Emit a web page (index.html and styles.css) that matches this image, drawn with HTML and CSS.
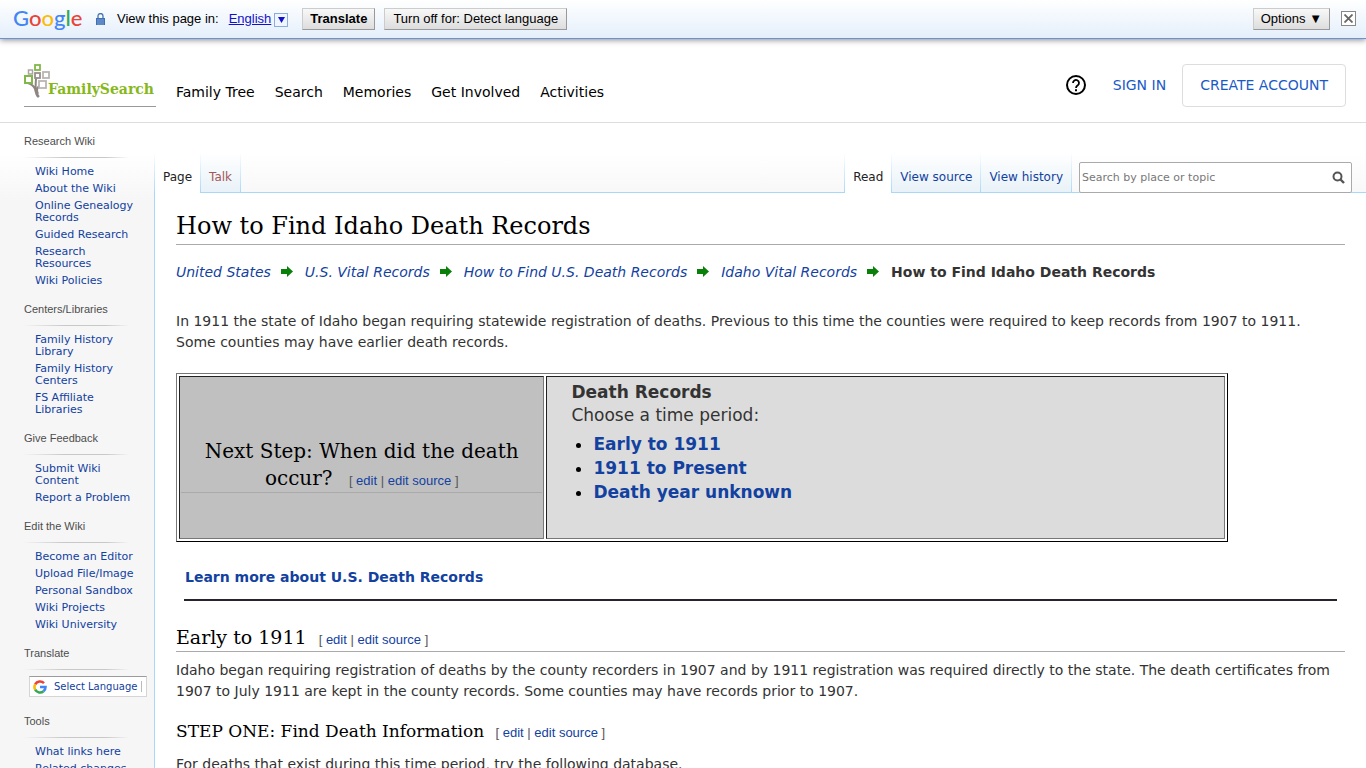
FILE: index.html
```html
<!DOCTYPE html>
<html lang="en">
<head>
  <meta charset="UTF-8">
  <title>How to Find Idaho Death Records</title>
  <link rel="stylesheet" href="styles.css">
</head>
<body>

  <div class="translate-bar">
    <span class="google"><span class="g-blue">G</span><span class="g-red">o</span><span class="g-yellow">o</span><span class="g-blue">g</span><span class="g-green">l</span><span class="g-red">e</span></span>
    <svg class="lock" width="9" height="12" viewBox="0 0 9 12">
      <path d="M2 5V3a2.500 2.500 0 0 1 5 0v2" fill="none" stroke="#4573b5" stroke-width="1.300"/>
      <rect x="0" y="5" width="9" height="7" fill="#3c6fb6"/>
      <path d="M1 7h7M1 9h7M1 11h7" stroke="#9dbce4" stroke-width=".7"/>
    </svg>
    <span class="view-in">View this page in:</span>
    <a href="#" class="lang">English</a>
    <button class="lang-arrow" aria-label="Choose language"><svg width="7" height="6" viewBox="0 0 7 6"><path d="M0 0h7L3.500 6z" fill="#11c"/></svg></button>
    <button class="bar-button translate"><b>Translate</b></button>
    <button class="bar-button">Turn off for: Detect language</button>
    <button class="bar-button options">Options ▼</button>
    <button class="close" aria-label="Close"><svg width="9" height="9" viewBox="0 0 9 9"><path d="M.5.5l8 8M8.500.5l-8 8" stroke="#666" stroke-width="1.800"/></svg></button>
  </div>

  <header class="header">
    <a href="#" class="logo" aria-label="FamilySearch home">
      <svg width="27" height="36" viewBox="0 0 27 36" fill="none">
        <path d="M4 20c3 1 6 3 7 6 1 4 1 6 3 8M12 15c0 5-1 8 0 12 0 3 1 5 3 7M17 22c-4 2-5 5-3 9" stroke="#8d8580" stroke-width="2"/>
        <rect x="11" y="2" width="5" height="5" stroke="#82b84a" stroke-width="1.800"/>
        <rect x="4.500" y="7" width="4" height="4" stroke="#aaa5a2" stroke-width="1.500"/>
        <rect x="11" y="10" width="5" height="5" stroke="#99908b" stroke-width="1.800"/>
        <rect x="19" y="9" width="6" height="6" stroke="#b9b5b2" stroke-width="1.800"/>
        <rect x="1" y="13" width="7" height="7" stroke="#82b84a" stroke-width="2"/>
        <rect x="15" y="18" width="7" height="7" stroke="#b9b5b2" stroke-width="1.800" fill="#fff"/>
      </svg>
      <span>FamilySearch</span>
    </a>
    <nav class="nav">
      <a href="#">Family Tree</a>
      <a href="#">Search</a>
      <a href="#">Memories</a>
      <a href="#">Get Involved</a>
      <a href="#">Activities</a>
    </nav>
    <div class="account">
      <button class="help" aria-label="Help">
        <svg width="22" height="22" viewBox="0 0 22 22" fill="none" stroke="#000" stroke-width="2">
          <circle cx="11" cy="11" r="9"/>
          <path d="M8 9a3 3 0 1 1 4.800 2.300C11.500 12.200 11 12.600 11 14" stroke-width="1.800"/>
          <path d="M11 15.200v2"/>
        </svg>
      </button>
      <a href="#" class="sign-in">SIGN IN</a>
      <a href="#" class="create">CREATE ACCOUNT</a>
    </div>
  </header>

  <div class="page">
    <aside class="sidebar">
      <section>
        <h3>Research Wiki</h3>
        <ul>
          <li><a href="#">Wiki Home</a></li>
          <li><a href="#">About the Wiki</a></li>
          <li><a href="#">Online Genealogy Records</a></li>
          <li><a href="#">Guided Research</a></li>
          <li><a href="#">Research<br>Resources</a></li>
          <li><a href="#">Wiki Policies</a></li>
        </ul>
      </section>
      <section>
        <h3>Centers/Libraries</h3>
        <ul>
          <li><a href="#">Family History<br>Library</a></li>
          <li><a href="#">Family History<br>Centers</a></li>
          <li><a href="#">FS Affiliate<br>Libraries</a></li>
        </ul>
      </section>
      <section>
        <h3>Give Feedback</h3>
        <ul>
          <li><a href="#">Submit Wiki<br>Content</a></li>
          <li><a href="#">Report a Problem</a></li>
        </ul>
      </section>
      <section>
        <h3>Edit the Wiki</h3>
        <ul>
          <li><a href="#">Become an Editor</a></li>
          <li><a href="#">Upload File/Image</a></li>
          <li><a href="#">Personal Sandbox</a></li>
          <li><a href="#">Wiki Projects</a></li>
          <li><a href="#">Wiki University</a></li>
        </ul>
      </section>
      <section>
        <h3>Translate</h3>
        <button class="select-language">
          <svg width="14" height="14" viewBox="0 0 14 14" fill="none" stroke-width="2.600">
            <path d="M2.200 4.300A5.500 5.500 0 0 1 11 3.200" stroke="#ea4335"/>
            <path d="M2.200 4.300a5.500 5.500 0 0 0 0 5.400" stroke="#fbbc05"/>
            <path d="M2.200 9.700a5.500 5.500 0 0 0 8.300 1.600" stroke="#34a853"/>
            <path d="M10.500 11.300A5.500 5.500 0 0 0 12.500 7H7" stroke="#4285f4"/>
          </svg>
          <span>Select Language</span>
        </button>
      </section>
      <section>
        <h3>Tools</h3>
        <ul>
          <li><a href="#">What links here</a></li>
          <li><a href="#">Related changes</a></li>
        </ul>
      </section>
    </aside>

    <main class="main">
      <div class="tabs">
        <a href="#" class="tab active">Page</a>
        <a href="#" class="tab talk">Talk</a>
        <span class="spacer"></span>
        <a href="#" class="tab active read">Read</a>
        <a href="#" class="tab">View source</a>
        <a href="#" class="tab">View history</a>
        <form class="search">
          <input type="text" placeholder="Search by place or topic" aria-label="Search by place or topic">
          <button type="button" aria-label="Search"><svg width="13" height="13" viewBox="0 0 13 13" fill="none" stroke="#555"><circle cx="5.500" cy="5.500" r="4" stroke-width="2"/><path d="M8.500 8.500l3.500 3.500" stroke-width="2.400"/></svg></button>
        </form>
      </div>

      <article class="content">
        <h1>How to Find Idaho Death Records</h1>

        <div class="crumbs">
          <a href="#">United States</a>
          <svg class="arrow" width="12" height="12" viewBox="0 0 12 12"><path d="M0 3h6V0l6 5.500L6 11V8H0z" fill="#0a800a"/></svg>
          <a href="#">U.S. Vital Records</a>
          <svg class="arrow" width="12" height="12" viewBox="0 0 12 12"><path d="M0 3h6V0l6 5.500L6 11V8H0z" fill="#0a800a"/></svg>
          <a href="#">How to Find U.S. Death Records</a>
          <svg class="arrow" width="12" height="12" viewBox="0 0 12 12"><path d="M0 3h6V0l6 5.500L6 11V8H0z" fill="#0a800a"/></svg>
          <a href="#">Idaho Vital Records</a>
          <svg class="arrow" width="12" height="12" viewBox="0 0 12 12"><path d="M0 3h6V0l6 5.500L6 11V8H0z" fill="#0a800a"/></svg>
          <b>How to Find Idaho Death Records</b>
        </div>

        <p>In 1911 the state of Idaho began requiring statewide registration of deaths. Previous to this time the counties were required to keep records from 1907 to 1911.<br>Some counties may have earlier death records.</p>

        <table class="steps">
          <tr>
            <td class="question">
              <h2>Next Step: When did the death occur? <span class="edit">[ <a href="#">edit</a> | <a href="#">edit source</a> ]</span></h2>
            </td>
            <td class="periods">
              <b>Death Records</b><br>
              Choose a time period:
              <ul>
                <li><a href="#">Early to 1911</a></li>
                <li><a href="#">1911 to Present</a></li>
                <li><a href="#">Death year unknown</a></li>
              </ul>
            </td>
          </tr>
        </table>

        <div class="learn"><a href="#">Learn more about U.S. Death Records</a></div>

        <h2>Early to 1911 <span class="edit">[ <a href="#">edit</a> | <a href="#">edit source</a> ]</span></h2>
        <p>Idaho began requiring registration of deaths by the county recorders in 1907 and by 1911 registration was required directly to the state. The death certificates from 1907 to July 1911 are kept in the county records. Some counties may have records prior to 1907.</p>

        <h3>STEP ONE: Find Death Information <span class="edit">[ <a href="#">edit</a> | <a href="#">edit source</a> ]</span></h3>
        <p>For deaths that exist during this time period, try the following database.</p>
      </article>
    </main>
  </div>

</body>
</html>
```
FILE: styles.css
```css
* {
  box-sizing: border-box;
}
body {
  margin: 0;
  height: 100vh;
  overflow: hidden;
  display: flex;
  flex-direction: column;
  background: #fff;
  color: #333;
  font-family: Verdana, "DejaVu Sans", sans-serif;
  font-size: 14px;
}
a {
  color: #1241a0;
  text-decoration: none;
}
button {
  font-family: inherit;
  cursor: pointer;
}
h1, h2, h3, p, ul {
  margin: 0;
  padding: 0;
}

/* google translate bar */
.translate-bar {
  flex: none;
  display: flex;
  align-items: center;
  height: 39px;
  padding: 0 10px 1px 13px;
  background: linear-gradient(#fff, #e4effb);
  border-bottom: 1px solid #6b90da;
  box-shadow: 0 1px 6px #888;
  color: #000;
  font-family: Arial, "Liberation Sans", sans-serif;
  font-size: 13px;
}
.google {
  width: 83px;
  padding-bottom: 2px;
  font-family: Lato, sans-serif;
  font-size: 22px;
  font-weight: 500;
  line-height: 30px;
}
.g-blue { color: #4285f4; }
.g-red { color: #ea4335; }
.g-yellow { color: #fbbc05; }
.g-green { color: #34a853; }
.view-in {
  margin: 0 10px 0 12px;
}
.lang {
  color: #11c;
  text-decoration: underline;
}
.lang-arrow {
  display: flex;
  align-items: center;
  justify-content: center;
  width: 14px;
  height: 14px;
  margin: 2px 14px 0 3px;
  padding: 0;
  background: #f0f6ff;
  border: 1px solid #8cace0;
}
.bar-button {
  height: 22px;
  margin-right: 9px;
  padding: 0 8px;
  background: linear-gradient(#f8f8f8, #ddd);
  border: 1px solid;
  border-color: #ccc #999 #999 #ccc;
  color: #000;
  font-size: 13px;
}
.translate {
  padding: 0 7px;
}
.options {
  margin: 0 11px 0 auto;
  padding: 0 7px;
}
.close {
  display: flex;
  align-items: center;
  justify-content: center;
  width: 15px;
  height: 15px;
  padding: 0;
  background: #fff;
  border: 1px solid #888;
}

/* site header */
.header {
  flex: none;
  display: flex;
  align-items: center;
  height: 84px;
  padding: 9px 20px 0 24px;
  border-bottom: 1px solid #ddd;
}
.logo {
  display: flex;
  align-items: flex-end;
  width: 132px;
  height: 44px;
  padding-bottom: 7px;
  border-bottom: 1px solid #999;
  color: #86b81c;
  font-family: "DejaVu Serif", serif;
  font-size: 14px;
  font-weight: bold;
}
.logo svg {
  flex: none;
}
.logo span {
  margin-left: -3px;
  line-height: 19px;
}
.nav {
  display: flex;
  gap: 20px;
  padding: 13px 0 0 20px;
}
.nav a {
  color: #000;
}
.account {
  display: flex;
  align-items: center;
  margin-left: auto;
}
.help {
  display: flex;
  margin-right: 22px;
  padding: 0;
  background: none;
  border: 0;
}
.sign-in, .create {
  color: #1a5ac8;
}
.sign-in {
  padding: 0 4px;
}
.create {
  margin-left: 12px;
  padding: 12px 17px;
  border: 1px solid #ddd;
  border-radius: 4px;
  line-height: 17px;
}

/* page */
.page {
  flex: 1;
  min-height: 0;
  display: flex;
  background: linear-gradient(#fff 30px, #f6f6f6 80px);
}
.sidebar {
  flex: none;
  width: 154px;
  padding: 11px 7px 0 24px;
  font-size: 11px;
}
.sidebar section {
  margin-bottom: 10px;
}
.sidebar h3 {
  padding-bottom: 9px;
  margin-bottom: 8px;
  border-bottom: 1px solid;
  border-image: linear-gradient(to right, #ccc0, #c8c8c8 33%, #c8c8c8 66%, #ccc0 85%) 1;
  color: #4d4d4d;
  font-family: Arial, "Liberation Sans", sans-serif;
  font-size: 11px;
  font-weight: normal;
  line-height: 14px;
}
.sidebar ul {
  padding-left: 11px;
  list-style: none;
}
.sidebar li {
  padding-bottom: 5px;
  line-height: 12px;
}
.select-language {
  display: flex;
  align-items: center;
  gap: 7px;
  width: 118px;
  height: 21px;
  margin: -2px 0 17px 5px;
  padding: 0 3px;
  background: #fff;
  border: 1px solid #d5d5d5;
  border-top-color: #9b9b9b;
  color: #1241a0;
  font-size: 10px;
  white-space: nowrap;
}
.select-language svg {
  flex: none;
}
.select-language span {
  padding-right: 4px;
  border-right: 1px solid #bbb;
}
.main {
  flex: 1;
  min-width: 0;
  display: flex;
  flex-direction: column;
}

/* tabs */
.tabs {
  flex: none;
  display: flex;
  height: 70px;
  padding: 30px 14px 0 0;
  background: linear-gradient(#a7d7f9, #a7d7f9) bottom / 100% 1px no-repeat;
  font-size: 12px;
}
.tab {
  padding: 14px 8px 0;
  border-right: 1px solid;
  border-image: linear-gradient(#fff, #a7d7f9) 1;
  background: linear-gradient(#fff, #e8f2f8) top / 100% 39px no-repeat;
  line-height: 20px;
}
.tab.active {
  background: #fff;
  color: #222;
}
.tab:first-child, .read {
  border-left: 1px solid;
}
.talk {
  color: #a55858;
}
.spacer {
  flex: 1;
}
.search {
  display: flex;
  align-items: center;
  width: 273px;
  height: 31px;
  margin: 9px 0 0 7px;
  padding: 0 6px 0 2px;
  background: #fff;
  border: 1px solid #aaa;
  border-radius: 2px;
}
.search input {
  flex: 1;
  min-width: 0;
  padding: 0;
  background: none;
  border: 0;
  font-family: inherit;
  font-size: 11px;
}
.search input::placeholder {
  color: #777;
}
.search button {
  display: flex;
  padding: 0;
  background: none;
  border: 0;
}

/* article */
.content {
  flex: 1;
  padding: 16px 21px 0;
  background: #fff;
  border-left: 1px solid #a7d7f9;
}
.content p {
  line-height: 21px;
}
.content h1, .content h2, .content h3 {
  color: #000;
  font-family: "Museo Slab", "DejaVu Serif", serif;
  font-weight: normal;
}
.content h1 {
  border-bottom: 1px solid #aaa;
  font-size: 24px;
  line-height: 35px;
}
.content h2 {
  border-bottom: 1px solid #aaa;
  font-size: 19px;
  line-height: 27px;
}
.content h3 {
  margin: 16px 0 9px;
  font-size: 17px;
  line-height: 27px;
}
.content .edit {
  margin-left: 6px;
  color: #555;
  font-family: Arial, "Liberation Sans", sans-serif;
  font-size: 13px;
  line-height: 14px;
}
.crumbs {
  display: flex;
  align-items: center;
  height: 21px;
  margin: 16px 0 29px;
}
.crumbs a {
  font-style: italic;
}
.arrow {
  margin: 0 12px 0 10px;
}
.steps {
  width: 90%;
  height: 169px;
  margin: 20px 0 25px;
  border: 1px outset #555;
  border-color: #777 #222 #222 #777;
  border-spacing: 2px;
}
.steps td {
  padding: 1px;
  border: 1px solid;
  border-color: #222 #777 #777 #222;
}
.steps .question {
  width: 35%;
  background: #c0c0c0;
  text-align: center;
}
.question h2 {
  padding: 0 20px;
  margin-top: 16px;
  font-size: 20px;
}
.question .edit {
  margin-left: 10px;
}
.steps .periods {
  padding: 4px 24px;
  background: #dcdcdc;
  font-size: 17px;
  line-height: 23px;
  vertical-align: top;
}
.periods ul {
  margin-top: 5px;
  padding-left: 22px;
}
.periods li {
  font-weight: bold;
  line-height: 24px;
}
.periods li::marker {
  color: #000;
}
.learn {
  margin: 0 8px 23px;
  padding: 0 1px 11px;
  border-bottom: 2px solid #282330;
  font-weight: bold;
  line-height: 21px;
}
.learn + h2 {
  margin-bottom: 8px;
}
```
